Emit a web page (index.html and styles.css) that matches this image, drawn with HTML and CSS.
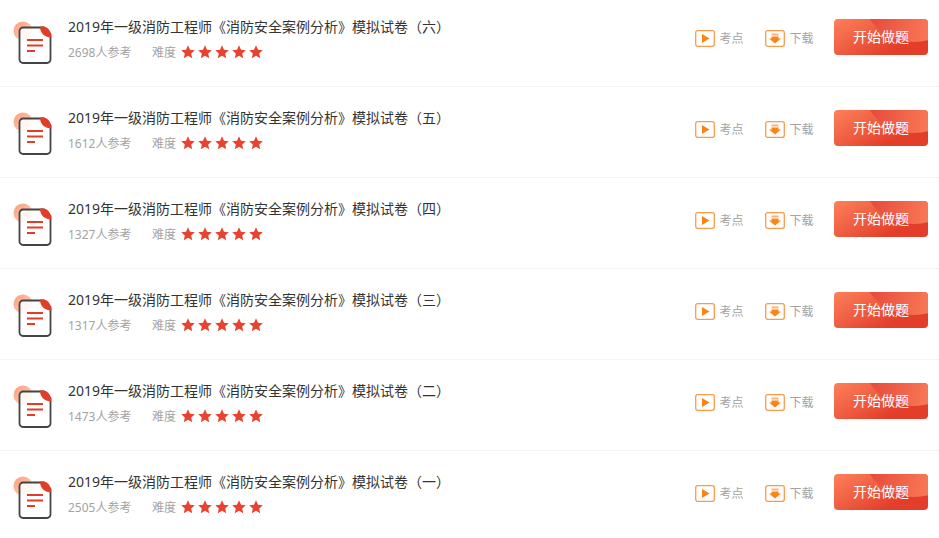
FILE: index.html
```html
<!DOCTYPE html>
<html lang="zh-CN">
<head>
<meta charset="utf-8">
<title>模拟试卷</title>
<link rel="stylesheet" href="styles.css">
</head>
<body>
<svg class="defs" width="0" height="0" aria-hidden="true">
  <defs>
    <linearGradient id="halo" x1="0" y1="0" x2="1" y2="1">
      <stop offset="0" stop-color="#fd9a78"/>
      <stop offset="1" stop-color="#fedcc8"/>
    </linearGradient>
    <symbol id="doc" viewBox="0 0 40 44">
      <circle cx="10" cy="10" r="9.500" fill="url(#halo)"/>
      <path d="M11 6.500H31L37.500 13V38.500a3.500 3.500 0 0 1-3.500 3.500H10A3.500 3.500 0 0 1 6.500 38.500V10A3.500 3.500 0 0 1 10 6.500Z" fill="#fff" fill-opacity=".85" stroke="#444" stroke-width="1.800"/>
      <path d="M27 5.500H30C34.500 5.500 38.400 10 38.400 16.500C32 16.500 27 12.500 27 5.500Z" fill="#e23e27"/>
      <path d="M14 19H30M14 24.500H30M14 30H22" stroke="#e23e27" stroke-width="1.800" fill="none"/>
    </symbol>
    <symbol id="star" viewBox="0 0 14 14">
      <path d="M7 .3l2 4.500 4.800.5-3.600 3.200 1 4.800L7 10.800 2.800 13.300l1-4.800L.2 5.300 5 4.800Z" fill="#e8432e"/>
    </symbol>
    <symbol id="play" viewBox="0 0 20 17">
      <rect x=".7" y=".7" width="18.600" height="15.600" rx="2" fill="#fff" stroke="#fc9a4c" stroke-width="1.300"/>
      <path d="M7 4L14.500 8.500 7 13Z" fill="#fb8414"/>
    </symbol>
    <symbol id="down" viewBox="0 0 20 17">
      <rect x=".7" y=".7" width="18.600" height="15.600" rx="2" fill="#fff" stroke="#fc9a4c" stroke-width="1.300"/>
      <path d="M6.500 3.500H13.500V5.500H6.500Z" fill="#fdb27a"/>
      <path d="M6.500 6.500H13.500V8.500H16L10 13.500 4 8.500H6.500Z" fill="#fb8414"/>
    </symbol>
  </defs>
</svg>
<ul class="list">
  <li class="row">
    <svg class="doc"><use href="#doc"/></svg>
    <div class="info">
      <h3 class="title">2019年一级消防工程师《消防安全案例分析》模拟试卷（六）</h3>
      <div class="meta"><span class="count">2698人参考</span><span class="level">难度</span><span class="stars"><svg class="star"><use href="#star"/></svg><svg class="star"><use href="#star"/></svg><svg class="star"><use href="#star"/></svg><svg class="star"><use href="#star"/></svg><svg class="star"><use href="#star"/></svg></span></div>
    </div>
    <a class="tool"><svg class="tool-icon"><use href="#play"/></svg>考点</a>
    <a class="tool"><svg class="tool-icon"><use href="#down"/></svg>下载</a>
    <a class="start"><span class="start-label">开始做题</span></a>
  </li>
  <li class="row">
    <svg class="doc"><use href="#doc"/></svg>
    <div class="info">
      <h3 class="title">2019年一级消防工程师《消防安全案例分析》模拟试卷（五）</h3>
      <div class="meta"><span class="count">1612人参考</span><span class="level">难度</span><span class="stars"><svg class="star"><use href="#star"/></svg><svg class="star"><use href="#star"/></svg><svg class="star"><use href="#star"/></svg><svg class="star"><use href="#star"/></svg><svg class="star"><use href="#star"/></svg></span></div>
    </div>
    <a class="tool"><svg class="tool-icon"><use href="#play"/></svg>考点</a>
    <a class="tool"><svg class="tool-icon"><use href="#down"/></svg>下载</a>
    <a class="start"><span class="start-label">开始做题</span></a>
  </li>
  <li class="row">
    <svg class="doc"><use href="#doc"/></svg>
    <div class="info">
      <h3 class="title">2019年一级消防工程师《消防安全案例分析》模拟试卷（四）</h3>
      <div class="meta"><span class="count">1327人参考</span><span class="level">难度</span><span class="stars"><svg class="star"><use href="#star"/></svg><svg class="star"><use href="#star"/></svg><svg class="star"><use href="#star"/></svg><svg class="star"><use href="#star"/></svg><svg class="star"><use href="#star"/></svg></span></div>
    </div>
    <a class="tool"><svg class="tool-icon"><use href="#play"/></svg>考点</a>
    <a class="tool"><svg class="tool-icon"><use href="#down"/></svg>下载</a>
    <a class="start"><span class="start-label">开始做题</span></a>
  </li>
  <li class="row">
    <svg class="doc"><use href="#doc"/></svg>
    <div class="info">
      <h3 class="title">2019年一级消防工程师《消防安全案例分析》模拟试卷（三）</h3>
      <div class="meta"><span class="count">1317人参考</span><span class="level">难度</span><span class="stars"><svg class="star"><use href="#star"/></svg><svg class="star"><use href="#star"/></svg><svg class="star"><use href="#star"/></svg><svg class="star"><use href="#star"/></svg><svg class="star"><use href="#star"/></svg></span></div>
    </div>
    <a class="tool"><svg class="tool-icon"><use href="#play"/></svg>考点</a>
    <a class="tool"><svg class="tool-icon"><use href="#down"/></svg>下载</a>
    <a class="start"><span class="start-label">开始做题</span></a>
  </li>
  <li class="row">
    <svg class="doc"><use href="#doc"/></svg>
    <div class="info">
      <h3 class="title">2019年一级消防工程师《消防安全案例分析》模拟试卷（二）</h3>
      <div class="meta"><span class="count">1473人参考</span><span class="level">难度</span><span class="stars"><svg class="star"><use href="#star"/></svg><svg class="star"><use href="#star"/></svg><svg class="star"><use href="#star"/></svg><svg class="star"><use href="#star"/></svg><svg class="star"><use href="#star"/></svg></span></div>
    </div>
    <a class="tool"><svg class="tool-icon"><use href="#play"/></svg>考点</a>
    <a class="tool"><svg class="tool-icon"><use href="#down"/></svg>下载</a>
    <a class="start"><span class="start-label">开始做题</span></a>
  </li>
  <li class="row last">
    <svg class="doc"><use href="#doc"/></svg>
    <div class="info">
      <h3 class="title">2019年一级消防工程师《消防安全案例分析》模拟试卷（一）</h3>
      <div class="meta"><span class="count">2505人参考</span><span class="level">难度</span><span class="stars"><svg class="star"><use href="#star"/></svg><svg class="star"><use href="#star"/></svg><svg class="star"><use href="#star"/></svg><svg class="star"><use href="#star"/></svg><svg class="star"><use href="#star"/></svg></span></div>
    </div>
    <a class="tool"><svg class="tool-icon"><use href="#play"/></svg>考点</a>
    <a class="tool"><svg class="tool-icon"><use href="#down"/></svg>下载</a>
    <a class="start"><span class="start-label">开始做题</span></a>
  </li>
</ul>
</body>
</html>
```
FILE: styles.css
```css
* { box-sizing: border-box; }
html, body { margin: 0; padding: 0; background: #fff; overflow: hidden; }
body { font-family: "Noto Sans", "Noto Sans CJK SC", sans-serif; }
.defs { display: block; height: 0; }
.list { list-style: none; margin: -4px 0 0; padding: 0; }
.row {
  display: flex;
  align-items: center;
  height: 91px;
  padding: 0 11px 0 13px;
  border-bottom: 1px dotted #ececec;
}
.row.last { border-bottom-color: transparent; }
.doc { width: 40px; height: 44px; flex: none; margin: 3px 15px 0 0; }
.info { flex: 1; display: flex; flex-direction: column; gap: 7px; margin-top: -3px; }
.title { margin: 0; font-size: 14px; font-weight: 400; line-height: 20px; color: #333; }
.meta { display: flex; align-items: center; font-size: 12px; line-height: 18px; color: #a3a3a3; }
.count { width: 84px; }
.level { width: 29px; }
.stars { display: flex; gap: 3px; margin-bottom: 2px; }
.star { width: 14px; height: 14px; display: block; }
.tool { display: flex; align-items: center; gap: 4.500px; width: 70px; margin-bottom: 6px; font-size: 12px; color: #a3a3a3; }
.tool-icon { width: 20px; height: 17px; flex: none; }
.start {
  position: relative;
  overflow: hidden;
  flex: none;
  width: 94px;
  height: 36px;
  margin: 0 0 8px -1px;
  border-radius: 4px;
  font-size: 14px;
  line-height: 36px;
  text-align: center;
  color: #fff;
  background: linear-gradient(150deg, #fe8059 0%, #ee5b40 42%, #e33e2a 72%, #e33e2a 100%);
}
.start::before {
  content: "";
  position: absolute;
  left: 28px;
  top: -73px;
  width: 104px;
  height: 96px;
  border-radius: 50%;
  background: linear-gradient(100deg, #e5483a 15%, #f97a57 70%);
}
.start-label { position: relative; }
```
